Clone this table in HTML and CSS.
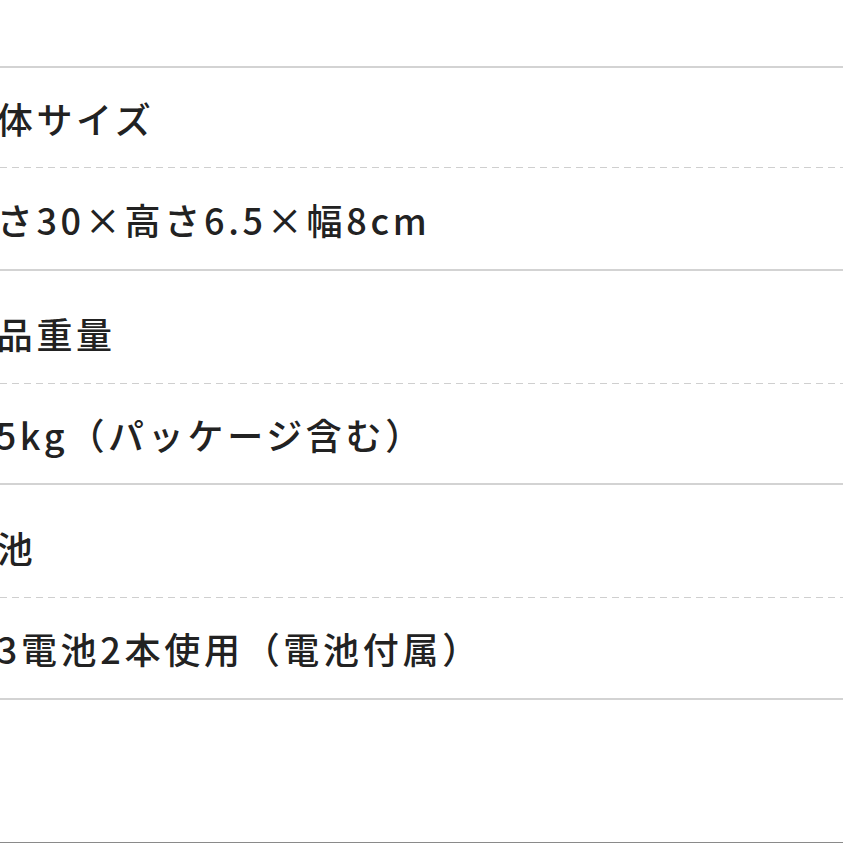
FILE: index.html
```html
<!DOCTYPE html>
<html lang="ja">
<head>
<meta charset="utf-8">
<title>仕様</title>
<link rel="stylesheet" href="styles.css">
</head>
<body>
<div class="page">
  <dl class="spec">
    <div class="spec-item first">
      <dt class="spec-label">本体サイズ</dt>
      <dd class="spec-value">長さ30×高さ6.5×幅8cm</dd>
    </div>
    <div class="spec-item">
      <dt class="spec-label">製品重量</dt>
      <dd class="spec-value">1.5kg（パッケージ含む）</dd>
    </div>
    <div class="spec-item last">
      <dt class="spec-label">電池</dt>
      <dd class="spec-value">単3電池2本使用（電池付属）</dd>
    </div>
  </dl>
</div>
</body>
</html>
```
FILE: styles.css
```css
html, body {
  margin: 0;
  padding: 0;
  background: #ffffff;
}
body {
  overflow: hidden;
}
.page {
  box-sizing: border-box;
  height: 843px;
  padding-top: 66px;
  border-bottom: 1px solid #8a8a8a;
  overflow: hidden;
}
.spec {
  margin: 0;
  font-family: "Noto Sans CJK JP", "Noto Sans", sans-serif;
  font-size: 36px;
  font-weight: 500;
  line-height: 54px;
  letter-spacing: 3.7px;
  color: #222222;
}
.spec-item {
  border-top: 2px solid #d3d3d3;
}
.spec-item.last {
  border-bottom: 2px solid #d3d3d3;
}
.spec-label {
  margin: 0;
  padding: 35px 0 23px 0;
  white-space: nowrap;
  text-indent: -43px;
}
.spec-item.first .spec-label {
  padding: 23px 0 22px 0;
}
.spec-value {
  margin: 0;
  padding: 24px 0 22px 0;
  white-space: nowrap;
  text-indent: -43px;
  background-image: linear-gradient(to right, #cfcfcf 0 7px, transparent 7px 12px);
  background-size: 12px 1px;
  background-repeat: repeat-x;
  background-position: left top;
}
.spec-item.first .spec-value {
  padding: 25px 0 23px 0;
}
.spec-item.last .spec-value {
  padding: 24px 0 23px 0;
}
```
